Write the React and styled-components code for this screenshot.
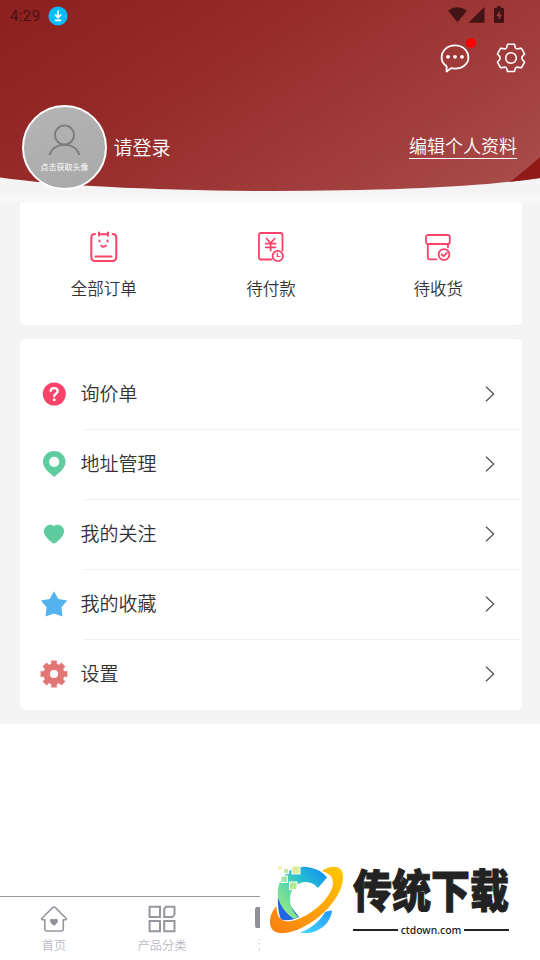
import styled, { createGlobalStyle } from "styled-components";

const PINK = "#fb4268";

const toothedPath = (cx, cy, teeth, outer, inner, topHalf, baseHalf) => {
  const points = [];
  for (let i = 0; i < teeth; i++) {
    const mid = (360 / teeth) * i - 90;
    [
      [mid - baseHalf, inner],
      [mid - topHalf, outer],
      [mid + topHalf, outer],
      [mid + baseHalf, inner],
    ].forEach(([deg, r]) => {
      const a = (deg * Math.PI) / 180;
      points.push(
        `${(cx + r * Math.cos(a)).toFixed(2)} ${(cy + r * Math.sin(a)).toFixed(2)}`
      );
    });
  }
  return `M${points.join("L")}Z`;
};

const orders = [
  { label: "全部订单", icon: <AllOrdersIcon /> },
  { label: "待付款", icon: <UnpaidIcon /> },
  { label: "待收货", icon: <ReceiveIcon /> },
];

const menu = [
  { label: "询价单", icon: <QuestionIcon /> },
  { label: "地址管理", icon: <PinIcon /> },
  { label: "我的关注", icon: <HeartIcon /> },
  { label: "我的收藏", icon: <StarIcon /> },
  { label: "设置", icon: <CogIcon /> },
];

const tabs = [
  { label: "首页", icon: <HomeIcon /> },
  { label: "产品分类", icon: <CategoryIcon /> },
  { label: "消息", icon: <MessageIcon /> },
];

export default function App() {
  return (
    <>
      <GlobalStyle />
      <Screen>
        <Content>
          <Header>
            <HeaderBackground />
            <StatusBar>
              <Clock>4:29</Clock>
              <DownloadBadge />
              <StatusIcons />
            </StatusBar>
            <Actions>
              <Action>
                <ChatIcon />
                <Dot />
              </Action>
              <Action>
                <GearIcon />
              </Action>
            </Actions>
            <Profile>
              <Avatar>
                <PersonIcon />
                <span>点击获取头像</span>
              </Avatar>
              <LoginText>请登录</LoginText>
              <EditLink>编辑个人资料</EditLink>
            </Profile>
          </Header>

          <OrderCard>
            {orders.map((item) => (
              <Order key={item.label}>
                {item.icon}
                <span>{item.label}</span>
              </Order>
            ))}
          </OrderCard>

          <MenuCard>
            {menu.map((item) => (
              <MenuItem key={item.label}>
                <MenuIcon>{item.icon}</MenuIcon>
                <MenuText>{item.label}</MenuText>
                <Chevron />
              </MenuItem>
            ))}
          </MenuCard>
        </Content>

        <TabBar>
          {tabs.map((item) => (
            <Tab key={item.label}>
              {item.icon}
              <span>{item.label}</span>
            </Tab>
          ))}
        </TabBar>

        <Brand>
          <BrandLogo />
          <BrandText>
            <BrandName>传统下载</BrandName>
            <BrandSite>
              <span>ctdown.com</span>
            </BrandSite>
          </BrandText>
        </Brand>
      </Screen>
    </>
  );
}

function HeaderBackground() {
  return (
    <HeaderSvg width="540" height="203" viewBox="0 0 540 203">
      <defs>
        <linearGradient
          id="red"
          gradientUnits="userSpaceOnUse"
          x1="40"
          y1="0"
          x2="300"
          y2="400"
        >
          <stop offset="0" stopColor="#8f2020" />
          <stop offset="0.3" stopColor="#962b29" />
          <stop offset="0.65" stopColor="#a13e3d" />
          <stop offset="1" stopColor="#ad5451" />
        </linearGradient>
        <clipPath id="curve">
          <path d="M0 0H540V178Q455 191 270 191Q90 190 0 177.500Z" />
        </clipPath>
      </defs>
      <rect width="540" height="203" fill="#f4f4f4" />
      <rect y="196" width="540" height="7" fill="#f8f8f8" />
      <g clipPath="url(#curve)">
        <rect width="540" height="192" fill="url(#red)" />
        <path d="M540 157Q528 168 506 185L540 185Z" fill="#901a18" />
      </g>
    </HeaderSvg>
  );
}

function DownloadBadge() {
  return (
    <svg width="20" height="20" viewBox="0 0 20 20">
      <circle cx="10" cy="10" r="9.600" fill="#05bdfb" />
      <path
        d="M10 4.500V11M6.800 8.500L10 11.700L13.200 8.500M6.800 14.300H13.200"
        fill="none"
        stroke="#fff"
        strokeWidth="1.700"
      />
    </svg>
  );
}

function StatusIcons() {
  return (
    <svg width="60" height="20" viewBox="0 0 60 20" fill="#421416">
      <path d="M1 4.500Q10.500 -2 20 4.500L10.500 16.300Z" />
      <path d="M37.500 1V16.800H21.500Z" />
      <path
        fillRule="evenodd"
        d="M50 0.300H54V1.900H56Q57 1.900 57 2.900V16Q57 17 56 17H48Q47 17 47 16V2.900Q47 1.900 48 1.900H50ZM52.800 4.800L49.300 10.100H51.500V14.100L55 8.800H52.800Z"
      />
    </svg>
  );
}

function ChatIcon() {
  return (
    <svg width="30" height="30" viewBox="0 0 30 30">
      <path
        d="M6.600 23.300C3.600 21.300 1.600 18 1.600 14.600C1.600 7.600 7.500 2.300 15 2.300S28.400 7.600 28.400 14.600C28.400 21 22.500 25.600 15 25.600C13.500 25.600 12.200 25.400 11 25.200L6.600 28.500Z"
        fill="none"
        stroke="#fff"
        strokeWidth="1.800"
        strokeLinejoin="round"
      />
      <g fill="#fff">
        <circle cx="8" cy="13.800" r="1.900" />
        <circle cx="15" cy="13.800" r="1.900" />
        <circle cx="22" cy="13.800" r="1.900" />
      </g>
    </svg>
  );
}

function GearIcon() {
  return (
    <svg
      width="30"
      height="30"
      viewBox="0 0 30 30"
      fill="none"
      stroke="#fff"
      strokeWidth="1.600"
      strokeLinejoin="round"
    >
      <path d="M11.500 1.300H18.500L19.300 4.600Q20.500 6.400 22.500 5.600L25.300 5.200L28.600 10.900L26.500 13.200Q25.300 15 26.500 16.800L28.600 19.100L25.300 24.800L22.500 24.400Q20.500 23.600 19.300 25.400L18.500 28.500H11.500L10.700 25.400Q9.500 23.600 7.500 24.400L4.700 24.800L1.400 19.100L3.500 16.800Q4.700 15 3.500 13.200L1.400 10.900L4.700 5.200L7.500 5.600Q9.500 6.400 10.700 4.600Z" />
      <circle cx="15" cy="15" r="5.300" />
    </svg>
  );
}

function PersonIcon() {
  return (
    <svg
      width="34"
      height="32"
      viewBox="0 0 34 32"
      fill="none"
      stroke="#7b7b7b"
      strokeWidth="1.900"
    >
      <circle cx="16.500" cy="11" r="9.600" />
      <path d="M1.500 31C3.500 24.500 9.500 20.800 16.500 20.800S29.500 24.500 31.500 31" />
    </svg>
  );
}

function AllOrdersIcon() {
  return (
    <svg
      width="30"
      height="32"
      viewBox="0 0 30 32"
      fill="none"
      stroke={PINK}
      strokeWidth="2"
      strokeLinecap="round"
    >
      <path d="M6 3Q2.300 3 2.300 7V26Q2.300 30 6.300 30H23.300Q27.300 30 27.300 26V7Q27.300 3 23.500 3" />
      <path d="M10 1.500V4.800M19 1.500V4.800M10.500 3.200H18.500M6.500 25.500H22.500" />
      <path d="M10.500 9.500V10.500M18.500 9.500V10.500M12.300 14.600Q14.600 17 17 14.600" />
    </svg>
  );
}

function UnpaidIcon() {
  return (
    <svg
      width="30"
      height="32"
      viewBox="0 0 30 32"
      fill="none"
      stroke={PINK}
      strokeWidth="1.800"
      strokeLinecap="round"
    >
      <path d="M15.500 28.500H5Q3 28.500 3 26.500V4Q3 2 5 2H24.500Q26.500 2 26.500 4V19.500" />
      <path d="M10.500 7.500L14.600 12L18.700 7.500M9.800 12.700H19.500M9.800 16.300H19.500M14.600 12.500V19.500" />
      <circle cx="21.800" cy="25" r="5.200" />
      <path d="M21.300 22.200V25.500H24" strokeWidth="1.200" />
    </svg>
  );
}

function ReceiveIcon() {
  return (
    <svg
      width="30"
      height="32"
      viewBox="0 0 30 32"
      fill="none"
      stroke={PINK}
      strokeWidth="1.800"
      strokeLinecap="round"
    >
      <rect x="3" y="4" width="23.800" height="9" rx="2" />
      <path d="M4.800 13.500V26.500Q4.800 28.300 6.600 28.300H13.500M25 13.500V16.500" />
      <circle cx="21" cy="23.500" r="5.400" />
      <path d="M18.500 23.300L20.500 25.300L23.800 21.800" />
    </svg>
  );
}

function QuestionIcon() {
  return (
    <svg width="28" height="28" viewBox="0 0 28 28">
      <circle cx="14.300" cy="14" r="11.500" fill={PINK} />
      <path
        d="M10.700 11Q10.700 8.200 14.200 8.200T17.700 11.200C17.700 13.500 14.200 13.500 14.200 16.300"
        fill="none"
        stroke="#fff"
        strokeWidth="2.300"
        strokeLinecap="round"
      />
      <circle cx="14.200" cy="19.800" r="1.500" fill="#fff" />
    </svg>
  );
}

function PinIcon() {
  return (
    <svg width="28" height="28" viewBox="0 0 28 28">
      <path
        fillRule="evenodd"
        fill="#5fcca0"
        d="M14.200 1C8 1 3 5.700 3 11.800C3 18.500 9 22.500 14.200 27C19.400 22.500 25.500 18.500 25.500 11.800C25.500 5.700 20.400 1 14.200 1ZM14.200 6.700A5.100 5.100 0 1 1 14.200 16.900A5.100 5.100 0 1 1 14.200 6.700Z"
      />
    </svg>
  );
}

function HeartIcon() {
  return (
    <svg width="28" height="28" viewBox="0 0 28 28">
      <path
        fill="#5fcca0"
        d="M14 6.200C11.500 3.900 8.200 4.500 6 6.500C3.300 9 3.400 13 5.500 16C7.500 19 11 21.800 13 23.200Q14 23.800 15 23.200C17 21.800 20.500 19 22.500 16C24.600 13 24.700 9 22 6.500C19.800 4.500 16.500 3.900 14 6.200Z"
      />
    </svg>
  );
}

function StarIcon() {
  return (
    <svg width="28" height="28" viewBox="0 0 28 28">
      <path
        fill="#54b2ef"
        d="M14 1.300L18.300 9L27.200 10.500L21.500 17.300L22.500 26.600L14 23.500L5.500 26.600L6.500 17.300L0.800 10.500L9.700 9Z"
      />
    </svg>
  );
}

function CogIcon() {
  return (
    <svg width="28" height="28" viewBox="0 0 28 28">
      <path
        d={toothedPath(14, 14, 8, 13.4, 10.4, 11.5, 14.5)}
        fill="#e27674"
        stroke="#e27674"
        strokeWidth="0.500"
        strokeLinejoin="round"
      />
      <circle cx="14" cy="14" r="4.100" fill="#fff" />
    </svg>
  );
}

function Chevron() {
  return (
    <svg width="10" height="16" viewBox="0 0 10 16">
      <path
        d="M1 0.800L8.700 8L1 15.200"
        fill="none"
        stroke="#555"
        strokeWidth="1.300"
      />
    </svg>
  );
}

function HomeIcon() {
  return (
    <svg width="28" height="28" viewBox="0 0 28 28">
      <path
        d="M4.800 14.800H2.500Q1.200 14.300 2 13.200L12.600 2.600Q14 1.500 15.400 2.600L26 13.200Q26.800 14.300 25.500 14.800H23.300V24Q23.300 26 21.300 26H6.800Q4.800 26 4.800 24Z"
        fill="none"
        stroke="#96979e"
        strokeWidth="1.600"
        strokeLinejoin="round"
      />
      <path
        d="M14 14.500C12.700 13 10 13.500 10 15.800C10 18 12.500 19.500 14 20.700C15.500 19.500 18 18 18 15.800C18 13.500 15.300 13 14 14.500Z"
        fill="#8f9098"
      />
    </svg>
  );
}

function CategoryIcon() {
  return (
    <svg
      width="28"
      height="28"
      viewBox="0 0 28 28"
      fill="none"
      stroke="#96979e"
      strokeWidth="2"
    >
      <path d="M1.600 1.800H12V12H1.600ZM1.600 16H12V26.300H1.600ZM16.200 16H26.500V26.300H16.200Z" />
      <path d="M18 1.800H26.500V9.500L24.500 12H16.200V3.800Z" />
    </svg>
  );
}

function MessageIcon() {
  return (
    <svg width="30" height="28" viewBox="0 0 30 28">
      <rect y="2" width="30" height="21" rx="2" fill="#8f9098" />
    </svg>
  );
}

function BrandLogo() {
  return (
    <svg width="78" height="76" viewBox="0 0 78 76">
      <defs>
        <linearGradient id="ring" x1="0" y1="1" x2="1" y2="0">
          <stop offset="0" stopColor="#f77f12" />
          <stop offset="0.450" stopColor="#ff9d0b" />
          <stop offset="1" stopColor="#ffc800" />
        </linearGradient>
        <linearGradient
          id="arc"
          gradientUnits="userSpaceOnUse"
          x1="16"
          y1="50"
          x2="56"
          y2="12"
        >
          <stop offset="0" stopColor="#8ee888" />
          <stop offset="0.350" stopColor="#5fd6a8" />
          <stop offset="0.650" stopColor="#25bcd2" />
          <stop offset="1" stopColor="#1496ed" />
        </linearGradient>
        <linearGradient id="tail" x1="0" y1="1" x2="1" y2="0">
          <stop offset="0" stopColor="#45d6fc" />
          <stop offset="1" stopColor="#249af7" />
        </linearGradient>
      </defs>
      <path
        d="M11 36C10.500 46 11.500 53 14 59.500Q22 62 32 57L22 44Z"
        fill="#2266e4"
      />
      <path
        d="M11 38C10 28 12 21 18 15C24 8 34 5.500 43 7.500Q54 9.500 60 17.500L51 28Q46 22 39 22C29 22 23 30 23 39Q23 49 31 57L27 59Q15 51 11 38Z"
        fill="url(#arc)"
      />
      <path
        d="M33 72.500C44 69 54 60 58 52Q61 50.500 65 50.500C64 64 49 76 33 72.500Z"
        fill="url(#tail)"
      />
      <path
        d="M55 11C63 5 76 4 76 17C76 35 57 57 36 67C19 76 3 76 3 62C3 56 5 51 9.500 46C9.500 56 13 61 21 61.500C41 60 66 37 66 23Q66 14 55 11Z"
        fill="url(#ring)"
      />
      <g stroke="#fff" strokeWidth="1">
        <rect x="25" y="6" width="8" height="8" fill="#dceb94" />
        <rect x="16.500" y="8.500" width="5" height="5" fill="#bfe8a0" />
        <rect x="10.500" y="5.500" width="5" height="5" fill="#eef4b8" />
        <rect x="14" y="16" width="6.500" height="6.500" fill="#a5e5a4" />
        <rect x="22.500" y="22" width="7.500" height="7.500" fill="#b4ea90" />
      </g>
    </svg>
  );
}

const GlobalStyle = createGlobalStyle`
  * {
    box-sizing: border-box;
  }
  body {
    margin: 0;
    background: #fff;
    font-family: "Noto Sans CJK SC", sans-serif;
    font-weight: 350;
  }
  svg {
    display: block;
    flex-shrink: 0;
  }
`;

const Screen = styled.div`
  position: relative;
  width: 540px;
  height: 960px;
  overflow: hidden;
  display: flex;
  flex-direction: column;
  justify-content: space-between;
  background: #fff;
`;

const Content = styled.div`
  height: 724px;
  background: #f4f4f4;
`;

const Header = styled.div`
  position: relative;
  height: 203px;
`;

const HeaderSvg = styled.svg`
  position: absolute;
  top: 0;
  left: 0;
`;

const StatusBar = styled.div`
  position: relative;
  height: 31px;
  padding: 0 33px 0 10px;
  display: flex;
  align-items: center;
  > svg:last-child {
    margin-left: auto;
  }
`;

const Clock = styled.span`
  width: 38px;
  font: 15px/20px Roboto, sans-serif;
  letter-spacing: 0.400px;
  color: #4a1112;
`;

const Actions = styled.div`
  position: relative;
  height: 74px;
  padding: 12px 14px 0 0;
  display: flex;
  justify-content: flex-end;
  gap: 26px;
`;

const Action = styled.div`
  position: relative;
  width: 30px;
  height: 30px;
`;

const Dot = styled.i`
  position: absolute;
  top: -5px;
  right: -6px;
  width: 10px;
  height: 10px;
  border-radius: 50%;
  background: #f00;
`;

const Profile = styled.div`
  position: relative;
  height: 85px;
  padding: 0 23px 0 22px;
  display: flex;
  align-items: center;
  color: #fff;
`;

const Avatar = styled.div`
  width: 85px;
  height: 85px;
  border: 2px solid #fff;
  border-radius: 50%;
  background: linear-gradient(160deg, #b5b5b5, #a9a9a9);
  display: flex;
  flex-direction: column;
  align-items: center;
  padding-top: 17px;
  gap: 5px;
  span {
    font-size: 8px;
    line-height: 12px;
    font-weight: 400;
    white-space: nowrap;
  }
`;

const LoginText = styled.span`
  margin-left: 6.500px;
  padding-bottom: 2px;
  font-size: 19px;
  line-height: 28px;
`;

const EditLink = styled.span`
  margin-left: auto;
  height: 24px;
  margin-bottom: 1px;
  border-bottom: 1px solid #fff;
  font-size: 18px;
  line-height: 21px;
`;

const OrderCard = styled.div`
  width: 502px;
  height: 122px;
  margin-left: 20px;
  padding-top: 28px;
  border-radius: 2px 2px 6px 6px;
  background: #fff;
  display: flex;
`;

const Order = styled.div`
  flex: 1;
  display: flex;
  flex-direction: column;
  align-items: center;
  gap: 13px;
  color: #333;
  font-size: 16.500px;
  line-height: 24px;
`;

const MenuCard = styled.div`
  width: 502px;
  height: 371px;
  margin: 14px 0 0 20px;
  padding: 20px 2px 0 20px;
  border-radius: 6px;
  background: #fff;
`;

const MenuItem = styled.div`
  position: relative;
  height: 70px;
  padding-right: 25px;
  display: flex;
  align-items: center;
  &:not(:last-child)::after {
    content: "";
    position: absolute;
    left: 44px;
    right: 0;
    bottom: -1px;
    height: 1px;
    background: #f0f0f0;
  }
`;

const MenuIcon = styled.div`
  width: 40.500px;
`;

const MenuText = styled.span`
  flex: 1;
  font-size: 19px;
  line-height: 28px;
  color: #333;
  padding-bottom: 3px;
`;

const TabBar = styled.div`
  height: 64px;
  border-top: 1px solid #96979a;
  display: flex;
`;

const Tab = styled.div`
  width: 108px;
  padding-top: 8px;
  display: flex;
  flex-direction: column;
  align-items: center;
  gap: 3px;
  font-size: 12.200px;
  line-height: 18px;
  color: #b8b8c4;
`;

const Brand = styled.div`
  position: absolute;
  right: 0;
  bottom: 0;
  width: 280px;
  height: 105px;
  padding: 5px 31px 0 7px;
  background: #fff;
  display: flex;
`;

const BrandText = styled.div`
  width: 156px;
  margin-left: 8px;
  padding-top: 4px;
`;

const BrandName = styled.div`
  height: 50px;
  font-size: 39px;
  line-height: 48px;
  font-weight: 900;
  color: #222;
  white-space: nowrap;
  transform: scaleY(1.170);
  -webkit-text-stroke: 0.800px #222;
`;

const BrandSite = styled.div`
  margin-top: 8px;
  display: flex;
  align-items: center;
  gap: 3px;
  font: 500 10.400px/16px "Noto Sans", sans-serif;
  color: #222;
  &::before,
  &::after {
    content: "";
    flex: 1;
    height: 2px;
    background: #222;
  }
`;
